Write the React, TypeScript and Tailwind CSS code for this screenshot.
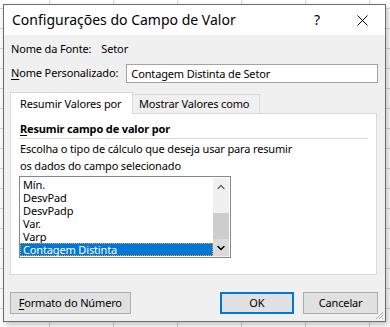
import { ChevronUp, ChevronDown } from 'lucide-react';

const items = ['Mín.', 'DesvPad', 'DesvPadp', 'Var.', 'Varp'];

export default function App() {
  return (
    <div className="relative w-[390px] h-[327px] overflow-hidden bg-white bg-[linear-gradient(to_right,#d6d6d6_1px,transparent_1px),linear-gradient(to_bottom,#d6d6d6_1px,transparent_1px)] [background-size:64px_20px] [background-position:49px_8px] font-['Noto_Sans',sans-serif] text-[11px] tracking-[-0.15px] text-black whitespace-nowrap">
      {/* dialog window */}
      <div className="absolute left-[3px] top-[4px] w-[383px] h-[318px] border border-[#6e6e6e] bg-[#f0f0f0] shadow-[2px_3px_6px_rgba(0,0,0,0.25)] flex flex-col">
        <div className="h-[30px] bg-white flex items-center pl-[8px] shrink-0">
          <span className="text-[14px] leading-[18px] tracking-normal">Configurações do Campo de Valor</span>
          <span className="ml-auto w-[10px] text-[14px] leading-[18px] text-center">?</span>
          <span className="ml-[34px] mr-[17px] w-[12px] h-[12px] flex items-center justify-center">
            <svg width="11" height="11" viewBox="0 0 11 11">
              <path d="M0.5 0.5 L10.5 10.5 M10.5 0.5 L0.5 10.5" stroke="#000" strokeWidth="1" />
            </svg>
          </span>
        </div>

        <div className="flex flex-col pl-[6px] pr-[7px]">
          <div className="mt-[6px] h-[16px] leading-[16px] flex pl-[1px]">
            <span>Nome da Fonte:</span>
            <span className="ml-[10px]">Setor</span>
          </div>

          <div className="mt-[7px] h-[19px] flex items-center pl-[1px]">
            <span className="w-[116px]">
              <span className="underline underline-offset-2">N</span>ome Personalizado:
            </span>
            <div className="w-[253px] h-[19px] border border-[#a3a3a3] bg-white flex items-center pl-[4px] leading-[16px]">
              Contagem Distinta de Setor
            </div>
          </div>

          {/* tabs */}
          <div className="mt-[9px] flex items-end h-[22px] relative z-10">
            <div className="h-[22px] w-[123px] bg-white border border-b-0 border-[#d9d9d9] flex items-center pl-[9px] leading-[16px]">
              Resumir Valores por
            </div>
            <div className="h-[19px] w-[127px] bg-[#f0f0f0] border border-l-0 border-b-0 border-[#d9d9d9] flex items-center pl-[6px] leading-[16px] mb-[1px]">
              Mostrar Valores como
            </div>
          </div>

          <div className="-mt-[1px] w-[367px] h-[162px] bg-white border border-[#d9d9d9] flex flex-col px-[8px]">
            <div className="mt-[7px] h-[16px] leading-[16px] font-bold pl-[1px]">
              <span className="underline underline-offset-2">R</span>esumir campo de valor por
            </div>
            <div className="mt-[1px] h-px bg-[#d9d9d9]" />
            <div className="mt-[1px] leading-[17px] pl-[1px]">
              Escolha o tipo de cálculo que deseja usar para resumir
              <br />
              os dados do campo selecionado
            </div>

            <div className="mt-[2px] w-[212px] h-[82px] border border-[#828790] bg-white flex">
              <div className="flex-1 flex flex-col pt-[1px]">
                {items.map((it) => (
                  <div key={it} className="h-[13px] leading-[13px] pl-[3px]">
                    {it}
                  </div>
                ))}
                <div className="h-[13px] leading-[11px] pl-[2px] bg-[#0078d7] text-white border border-dotted border-[#ff9d2e]">
                  Contagem Distinta
                </div>
              </div>
              <div className="w-[16px] mr-[1px] mt-[1px] flex flex-col bg-[#f0f0f0]">
                <div className="h-[17px] flex items-center justify-center text-[#606060]">
                  <ChevronUp size={12} strokeWidth={2.5} />
                </div>
                <div className="h-[18px]" />
                <div className="h-[26px] bg-[#cdcdcd]" />
                <div className="h-[17px] bg-[#dadada] flex items-center justify-center text-[#000]">
                  <ChevronDown size={12} strokeWidth={3} />
                </div>
              </div>
            </div>
          </div>

          {/* buttons */}
          <div className="mt-[17px] flex items-center">
            <button className="w-[121px] h-[22px] bg-[#e1e1e1] border border-[#adadad] leading-[16px]">
              <span className="underline underline-offset-2">F</span>ormato do Número
            </button>
            <button className="ml-[89px] w-[75px] h-[22px] bg-[#e1e1e1] border-2 border-[#0078d7] leading-[16px]">
              OK
            </button>
            <button className="ml-[9px] w-[75px] h-[22px] bg-[#e1e1e1] border border-[#adadad] leading-[16px]">
              Cancelar
            </button>
          </div>
        </div>

        <svg className="absolute right-[1px] bottom-[1px]" width="10" height="10" viewBox="0 0 10 10">
          <path d="M9 2 L2 9 M9 5 L5 9 M9 8 L8 9" stroke="#b0b0b0" strokeWidth="1" />
        </svg>
      </div>
    </div>
  );
}
